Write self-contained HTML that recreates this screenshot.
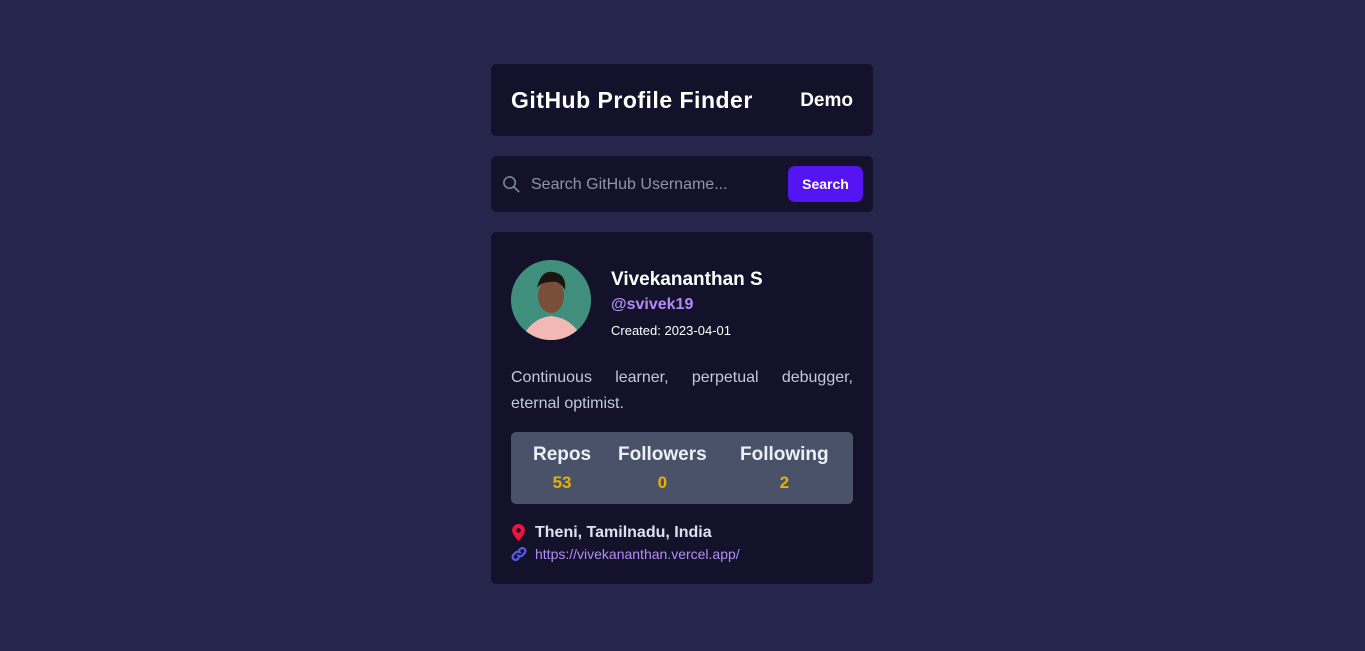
<!DOCTYPE html>
<html><head><meta charset="utf-8"><style>
*{box-sizing:border-box;margin:0;padding:0}
body{width:1365px;height:651px;background:#26264d;font-family:"Liberation Sans",sans-serif;position:relative;overflow:hidden}
.box{position:absolute;left:491px;width:382px;background:#13122a;border-radius:5px}
.hdr{top:64px;height:72px}
.hdr .t{position:absolute;left:20px;top:23px;color:#fff;font-weight:bold;font-size:23px;letter-spacing:0.5px}
.hdr .d{position:absolute;right:20px;top:26px;color:#fff;font-weight:bold;font-size:19px}
.srch{top:156px;height:56px}
.srch .ph{position:absolute;left:40px;top:20px;color:#8f93a8;font-size:16px}
.btn{position:absolute;right:10px;top:10px;width:75px;height:36px;background:#5514f2;border-radius:7px;color:#fff;font-weight:bold;font-size:14px;text-align:center;line-height:36px}
.card{top:232px;height:352px}
.av{position:absolute;left:20px;top:28px;width:80px;height:80px;border-radius:50%;overflow:hidden;background:#3f8f7c}
.nm{position:absolute;left:120px;top:37px;color:#fff;font-weight:bold;font-size:19px}
.un{position:absolute;left:120px;top:64px;color:#b28cf6;font-weight:bold;font-size:16px}
.cr{position:absolute;left:120px;top:91px;color:#fff;font-size:13px}
.bio{position:absolute;left:20px;top:133px;width:342px;color:#c4c8dc;font-size:16px;line-height:26px}
.bio span{display:block;text-align:justify;text-align-last:justify}
.st{position:absolute;left:20px;top:200px;width:342px;height:72px;background:#4a5269;border-radius:5px}
.s{position:absolute;top:12px;text-align:center;font-weight:bold}
.s .a{color:#eef0f8;font-size:19px}.s .b{color:#e8b000;font-size:17px;margin-top:7px}
.loc{position:absolute;left:44px;top:292px;color:#dfe2ee;font-weight:bold;font-size:16px}
.lnk{position:absolute;left:44px;top:314px;color:#b28cf6;font-size:14px}
</style></head><body>
<div class="box hdr"><div class="t">GitHub Profile Finder</div><div class="d">Demo</div></div>
<div class="box srch">
<svg style="position:absolute;left:11px;top:19px" width="19" height="19" viewBox="0 0 20 20"><circle cx="8" cy="8" r="6" fill="none" stroke="#7a7e92" stroke-width="1.8"/><path d="M12.5 12.5L18 18" stroke="#7a7e92" stroke-width="2"/></svg>
<div class="ph">Search GitHub Username...</div><div class="btn">Search</div></div>
<div class="box card">
<div class="av"><svg width="80" height="80"><rect width="80" height="80" fill="#3f8f7c"/><path d="M10 80 Q20 58 40 56 Q62 58 72 80Z" fill="#f2b9b4"/><ellipse cx="40" cy="36" rx="13" ry="17" fill="#7a4f3a"/><path d="M26 28 Q30 10 42 12 Q56 14 54 30 Q48 20 40 22 Q30 22 26 28Z" fill="#1b1410"/></svg></div>
<div class="nm">Vivekananthan S</div><div class="un">@svivek19</div><div class="cr">Created: 2023-04-01</div>
<div class="bio"><span>Continuous learner, perpetual debugger,</span>eternal optimist.</div>
<div class="st">
<div class="s" style="left:22px"><div class="a">Repos</div><div class="b">53</div></div>
<div class="s" style="left:107px"><div class="a">Followers</div><div class="b">0</div></div>
<div class="s" style="left:229px"><div class="a">Following</div><div class="b">2</div></div>
</div>
<svg style="position:absolute;left:21px;top:292px" width="13" height="17" viewBox="0 0 12 16"><path d="M6 0C2.7 0 0 2.6 0 6c0 4 6 10 6 10s6-6 6-10C12 2.6 9.3 0 6 0z" fill="#f0143c"/><circle cx="6" cy="6" r="2.2" fill="#13122a"/></svg>
<div class="loc">Theni, Tamilnadu, India</div>
<svg style="position:absolute;left:20px;top:314px" width="16" height="16" viewBox="0 0 16 16" fill="none" stroke="#5a5cf0" stroke-width="2.2" stroke-linecap="round"><path d="M7 9.5a3 3 0 0 0 4.2 0l2.6-2.6a3 3 0 0 0-4.2-4.2L8.4 3.9"/><path d="M9 6.5a3 3 0 0 0-4.2 0L2.2 9.1a3 3 0 0 0 4.2 4.2l1.2-1.2"/></svg>
<div class="lnk">https://vivekananthan.vercel.app/</div>
</div>
</body></html>
